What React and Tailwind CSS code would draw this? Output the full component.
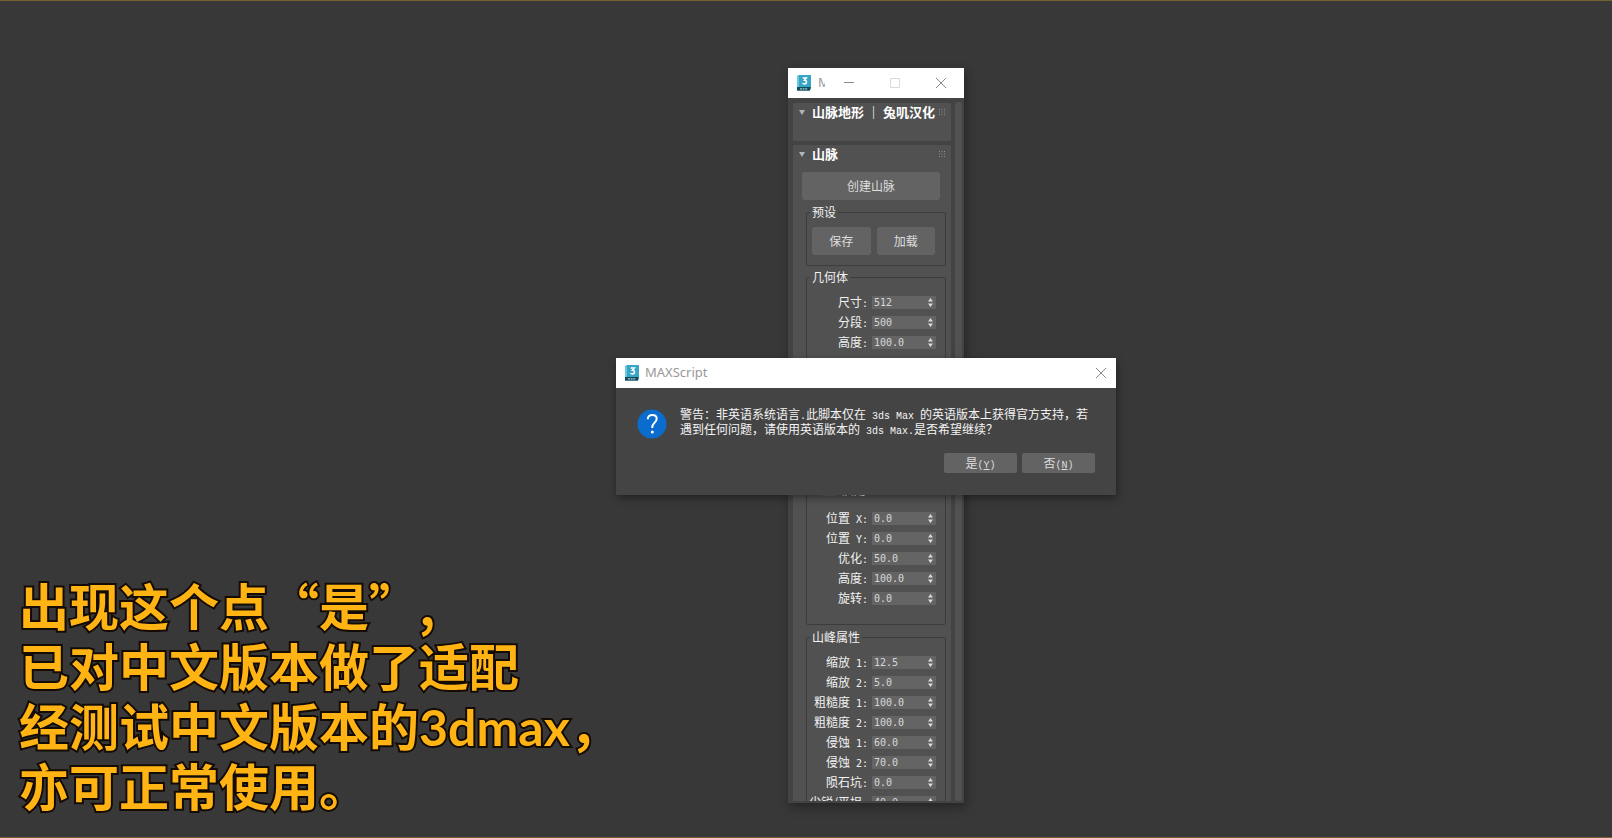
import { useState } from 'react';

// [label, suffix, value]
const GEOMETRY = [
  ['尺寸', ':', '512'],
  ['分段', ':', '500'],
  ['高度', ':', '100.0'],
];

const PLACEMENT = [
  ['位置', ' X:', '0.0'],
  ['位置', ' Y:', '0.0'],
  ['优化', ':', '50.0'],
  ['高度', ':', '100.0'],
  ['旋转', ':', '0.0'],
];

const PEAKS = [
  ['缩放', ' 1:', '12.5'],
  ['缩放', ' 2:', '5.0'],
  ['粗糙度', ' 1:', '100.0'],
  ['粗糙度', ' 2:', '100.0'],
  ['侵蚀', ' 1:', '60.0'],
  ['侵蚀', ' 2:', '70.0'],
  ['陨石坑', ':', '0.0'],
  ['尖锐/平坦', ':', '40.0'],
];

function MaxIcon() {
  return (
    <svg viewBox="0 0 16 16" className="size-4 shrink-0" aria-hidden="true">
      <path d="M1 1.500 3 0H15v13l-1 2.500H1z" fill="#1b6f83" />
      <path d="M3 0H15v12H3z" fill="#37a5c6" />
      <path d="M1 1.500 3 0v12H1z" fill="#6cc7df" />
      <path d="M1 12h13v3.500H1z" fill="#114c5c" />
      <path d="M6.700 3h3.600L8.500 5.200c1.300 0 2 .8 2 1.800 0 1.200-.9 1.900-2.100 1.900-.9 0-1.600-.3-2-.8" fill="none" stroke="#fff" strokeWidth="1.500" />
      <path d="M4 13.800h7.500" stroke="#a5c6cd" strokeWidth="1.200" strokeDasharray="2 .6" />
    </svg>
  );
}

function CloseIcon() {
  return (
    <svg viewBox="0 0 12 12" className="size-3" fill="none" stroke="#8a8a8a" aria-hidden="true">
      <path d="M1 1 11 11M11 1 1 11" />
    </svg>
  );
}

function Latin({ children }) {
  return <span className="whitespace-pre font-['Liberation_Mono',monospace] text-[10px] leading-none">{children}</span>;
}

function Spinner({ id, label, suffix, value }) {
  const [text, setText] = useState(value);

  return (
    <div className="flex h-5 items-center justify-end gap-1">
      <label htmlFor={id} className="whitespace-nowrap text-xs text-[#f2f2f2]">
        {label}
        <span className="whitespace-pre font-['DejaVu_Sans_Mono',monospace] text-[10px] leading-none">{suffix}</span>
      </label>
      <div className="flex h-[13px] w-16 shrink-0 items-center bg-[#646464] pr-[3px]">
        <input
          id={id}
          type="text"
          value={text}
          onChange={e => setText(e.target.value)}
          className="h-[13px] min-w-0 flex-1 bg-transparent pl-[2px] font-['DejaVu_Sans_Mono',monospace] text-[10px] text-[#d8d8d8] outline-none"
        />
        <svg viewBox="0 0 5 9" className="h-[9px] w-[5px]" fill="#dcdcdc" aria-hidden="true">
          <path d="M2.500 0 5 3.500H0zM2.500 9 5 5.500H0z" />
        </svg>
      </div>
    </div>
  );
}

function SpinnerList({ name, rows }) {
  return rows.map(([label, suffix, value], i) => (
    <Spinner key={label + suffix} id={`${name}-${i}`} label={label} suffix={suffix} value={value} />
  ));
}

function Group({ title, children, className = '' }) {
  return (
    <fieldset className={`min-w-0 rounded-[2px] border border-[#3c3c3c] ${className}`}>
      <legend className="ml-[3px] px-[2px] text-xs leading-4 text-[#f2f2f2]">{title}</legend>
      {children}
    </fieldset>
  );
}

function Rollout({ title, children, className = '' }) {
  return (
    <section className={`rounded-[2px] border border-[#434343] bg-[#515151] ${className}`}>
      <header className="flex h-[18px] items-center px-[6px]">
        <svg viewBox="0 0 6 5" className="h-[5px] w-[6px] shrink-0" fill="#b4b4b4" aria-hidden="true">
          <path d="M0 0h6L3 5z" />
        </svg>
        <h2 className="ml-[7px] min-w-0 flex-1 overflow-hidden whitespace-nowrap text-[13px] leading-[18px] font-bold text-white">{title}</h2>
        <svg viewBox="0 0 6 6" className="size-[6px] shrink-0" fill="#8c8c8c" aria-hidden="true">
          <path d="M0 0h1v1H0zM2.500 0h1v1h-1zM5 0h1v1H5zM0 2.500h1v1H0zM2.500 2.500h1v1h-1zM5 2.500h1v1H5zM0 5h1v1H0zM2.500 5h1v1h-1zM5 5h1v1H5z" />
        </svg>
      </header>
      {children}
    </section>
  );
}

function MountainWindow() {
  return (
    <div className="absolute bottom-[34px] left-[788px] top-[67px] flex w-44 flex-col border-b-2 border-[#434343] bg-[#434343] shadow-[2px_4px_10px_rgba(0,0,0,0.35)]">
      <div className="flex h-[30px] shrink-0 items-center bg-white pl-2">
        <MaxIcon />
        <span className="ml-[6px] w-[7px] overflow-hidden font-['Noto_Sans',sans-serif] text-[13px] text-[#999]">M</span>
        <div className="ml-auto flex">
          <button type="button" aria-label="Minimize" className="grid h-[30px] w-[46px] place-items-center">
            <svg viewBox="0 0 10 10" className="size-[10px]" stroke="#8a8a8a"><path d="M0 4.500h10" /></svg>
          </button>
          <button type="button" aria-label="Maximize" className="grid h-[30px] w-[46px] place-items-center">
            <svg viewBox="0 0 10 10" className="size-[10px]" fill="none" stroke="#dadada"><path d="M.5.500h9v9h-9z" /></svg>
          </button>
          <button type="button" aria-label="Close" className="grid h-[30px] w-[46px] place-items-center">
            <CloseIcon />
          </button>
        </div>
      </div>

      <div className="flex min-h-0 flex-1 gap-[3px] overflow-hidden pl-1 pr-[2px] pt-1">
        <div className="min-w-0 flex-1">
          <Rollout title="山脉地形 ｜ 兔叽汉化" className="h-10" />
          <Rollout title="山脉" className="mt-[2px] pb-2">
            <div className="pl-[9px] pr-[11px]">
              <button type="button" className="mt-[9px] h-7 w-full rounded-[3px] bg-[#636363] text-xs text-[#dedede]">创建山脉</button>
            </div>

            <div className="pl-[13px] pr-[5px]">
              <Group title="预设" className="mt-1">
                <div className="flex gap-[6px] pb-[10px] pl-[5px] pr-[10px] pt-[7px]">
                  <button type="button" className="h-7 flex-1 rounded-[3px] bg-[#636363] text-xs text-[#dedede]">保存</button>
                  <button type="button" className="h-7 flex-1 rounded-[3px] bg-[#636363] text-xs text-[#dedede]">加载</button>
                </div>
              </Group>

              <Group title="几何体" className="mt-[3px] h-[110px] pr-[9px] pt-[7px]">
                <SpinnerList name="geometry" rows={GEOMETRY} />
              </Group>

              <Group title="位置" className="mt-1 h-[242px] pr-[9px] pt-[81px]">
                <div className="mb-2 flex h-5 items-center gap-[7px] pl-4 text-xs text-[#f2f2f2]">
                  <input id="enabled" type="checkbox" className="size-3 appearance-none bg-[#636363]" />
                  <label htmlFor="enabled">启用</label>
                </div>
                <SpinnerList name="placement" rows={PLACEMENT} />
              </Group>

              <Group title="山峰属性" className="mt-1 pb-2 pr-[9px] pt-[7px]">
                <SpinnerList name="peak" rows={PEAKS} />
              </Group>
            </div>
          </Rollout>
        </div>
        <div className="w-[7px] rounded-[2px] bg-[#515151]" />
      </div>
    </div>
  );
}

function WarningDialog() {
  return (
    <div role="dialog" aria-label="MAXScript" className="absolute left-[616px] top-[357px] w-[500px] bg-[#444] shadow-[1px_3px_8px_rgba(0,0,0,0.4)]">
      <div className="flex h-[30px] items-center bg-white pl-2">
        <MaxIcon />
        <span className="ml-[5px] font-['Noto_Sans',sans-serif] text-[13px] text-[#999]">MAXScript</span>
        <button type="button" aria-label="Close" className="ml-auto grid size-[30px] place-items-center">
          <CloseIcon />
        </button>
      </div>

      <div className="flex items-start gap-[13px] pl-[21px] pt-[19px]">
        <svg viewBox="0 0 30 30" className="mt-[2px] size-[30px] shrink-0" aria-hidden="true">
          <circle cx="15" cy="15" r="14.500" fill="#0a6ccf" />
          <path d="M10.800 10.300c0-2.900 1.800-4.400 4.500-4.400 2.600 0 4.400 1.500 4.400 3.900 0 3.700-4.400 4-4.400 8.300v.8" fill="none" stroke="#fff" strokeWidth="2" />
          <circle cx="15.300" cy="23" r="1.500" fill="#fff" />
        </svg>
        <p className="whitespace-nowrap text-xs leading-[14px] text-[#f4f4f4]">
          警告：非英语系统语言<Latin>.</Latin>此脚本仅在<Latin>{' 3ds Max '}</Latin>的英语版本上获得官方支持，若
          <br />
          遇到任何问题，请使用英语版本的<Latin>{' 3ds Max.'}</Latin>是否希望继续？
        </p>
      </div>

      <div className="flex justify-end gap-[5px] pb-[22px] pr-[21px] pt-[14px]">
        <button type="button" className="h-5 w-[73px] rounded-[2px] bg-[#636363] text-xs text-[#dedede]">是<Latin>(<u>Y</u>)</Latin></button>
        <button type="button" className="h-5 w-[73px] rounded-[2px] bg-[#636363] text-xs text-[#dedede]">否<Latin>(<u>N</u>)</Latin></button>
      </div>
    </div>
  );
}

export default function App() {
  return (
    <main className="relative min-h-screen overflow-hidden border-y border-[#75602f] bg-[#383838] font-['Noto_Sans_CJK_SC',sans-serif]">
      <MountainWindow />
      <WarningDialog />

      {/* Subtitle */}
      <p className="absolute bottom-[23px] left-[19px] whitespace-nowrap text-[50px] font-bold leading-[60px] text-[#ffb414] [paint-order:stroke_fill] [-webkit-text-stroke:4px_#140c04]">
        出现这个点“是”,
        <br />
        已对中文版本做了适配
        <br />
        经测试中文版本的<span className="font-['Lato',sans-serif] leading-none">3dmax</span>，
        <br />
        亦可正常使用。
      </p>
    </main>
  );
}
